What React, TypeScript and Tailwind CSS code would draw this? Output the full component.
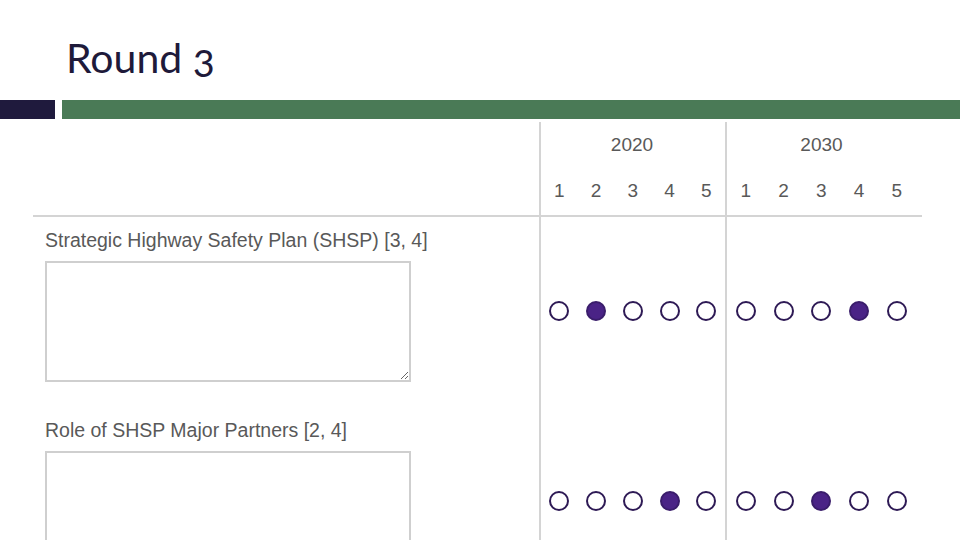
import React from "react";

type Row = { label: string; picks: [number, number] };

const rows: Row[] = [
  { label: "Strategic Highway Safety Plan (SHSP) [3, 4]", picks: [2, 4] },
  { label: "Role of SHSP Major Partners [2, 4]", picks: [4, 3] },
];

function Radio({ on }: { on: boolean }) {
  return (
    <span
      className={
        on
          ? "block h-[20px] w-[20px] rounded-full border-[2.5px] border-[#3a1d6b] bg-[#4a2386]"
          : "block h-[20px] w-[20px] rounded-full border-[2.5px] border-[#2e1a55] bg-white"
      }
    />
  );
}

function Scale({ pick, wide }: { pick: number; wide: boolean }) {
  return (
    <div className="flex h-full items-center">
      {[1, 2, 3, 4, 5].map((n) => (
        <div
          key={n}
          className={wide ? "flex w-[37.75px] justify-center" : "flex w-[36.75px] justify-center"}
        >
          <Radio on={n === pick} />
        </div>
      ))}
    </div>
  );
}

function Numbers({ wide }: { wide: boolean }) {
  return (
    <div className="flex">
      {[1, 2, 3, 4, 5].map((n) => (
        <div
          key={n}
          className={wide ? "w-[37.75px] text-center" : "w-[36.75px] text-center"}
        >
          {n}
        </div>
      ))}
    </div>
  );
}

export default function App() {
  return (
    <div className="relative h-[540px] w-[960px] overflow-hidden bg-white">
      {/* slide title */}
      <div
        className="h-[100px] pl-[66px] pt-[34px] text-[41px] leading-[48px] text-[#1e1a3a] oldstyle-nums"
        style={{ fontFamily: "Lato, 'Open Sans', sans-serif" }}
      >
        Round 3
      </div>

      {/* accent bars */}
      <div className="flex h-[19px] gap-[7px]">
        <div className="w-[55px] bg-[#1f1a3d]" />
        <div className="flex-1 bg-[#4a7a56]" />
      </div>

      {/* survey grid */}
      <div
        className="ml-[33px] mt-[3px] w-[889px] text-[#595959]"
        style={{ fontFamily: "'Liberation Sans', Arial, sans-serif" }}
      >
        {/* header */}
        <div className="flex h-[95px] border-b-2 border-[#d4d4d4]">
          <div className="w-[506px]" />
          <div className="w-[186px] border-l-2 border-[#d4d4d4] pt-[12px] text-[19px] leading-[22px]">
            <div className="text-center pr-[2px]">2020</div>
            <div className="mt-[24px]">
              <Numbers wide={false} />
            </div>
          </div>
          <div className="flex-1 border-l-2 border-[#d4d4d4] pt-[12px] text-[19px] leading-[22px]">
            <div className="w-[189px] text-center">2030</div>
            <div className="mt-[24px]">
              <Numbers wide={true} />
            </div>
          </div>
        </div>

        {/* question rows */}
        {rows.map((r) => (
          <div key={r.label} className="flex h-[190px]">
            <div className="w-[506px] pl-[12px] pt-[12px]">
              <div className="text-[19.5px] leading-[22px]">{r.label}</div>
              <textarea
                readOnly
                className="mt-[10px] block h-[121px] w-[366px] resize border-2 border-[#cfcfcf] bg-white outline-none"
              />
            </div>
            <div className="w-[186px] border-l-2 border-[#d4d4d4] pb-[2px]">
              <Scale pick={r.picks[0]} wide={false} />
            </div>
            <div className="flex-1 border-l-2 border-[#d4d4d4] pb-[2px]">
              <Scale pick={r.picks[1]} wide={true} />
            </div>
          </div>
        ))}
      </div>
    </div>
  );
}
